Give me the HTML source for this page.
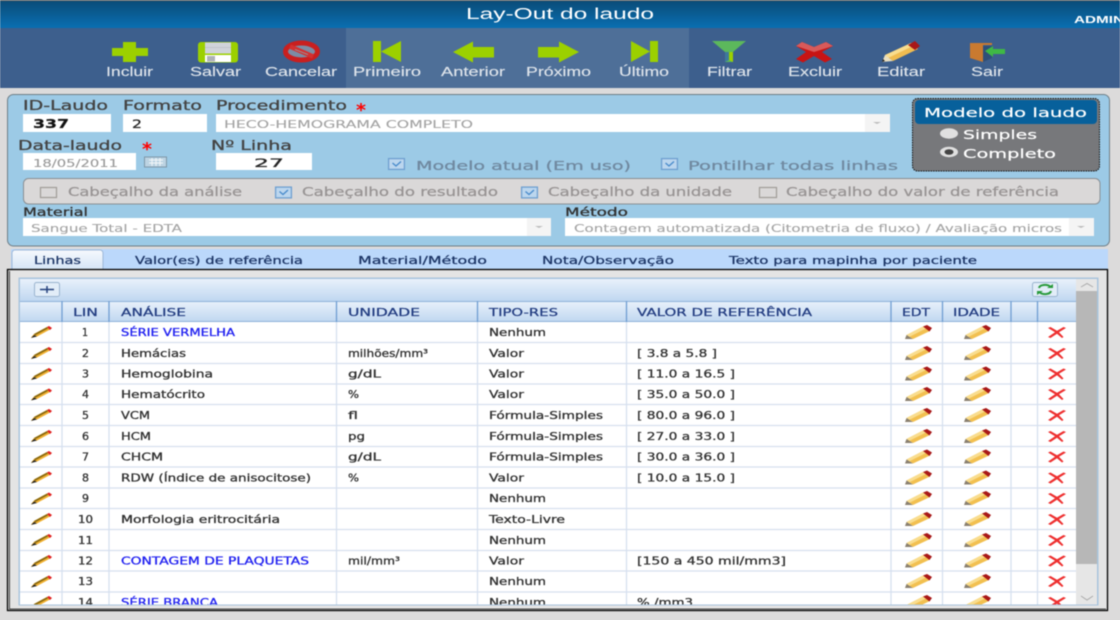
<!DOCTYPE html>
<html lang="pt"><head><meta charset="utf-8"><title>Lay-Out do laudo</title>
<style>
html,body{margin:0;padding:0;background:#dcdbdb;overflow:hidden}
svg{display:block;filter:blur(.4px)}
text{font-family:"DejaVu Sans","Liberation Sans",sans-serif;font-size:10.5px;fill:#333;stroke:#333;stroke-width:.3}
.tb{font-family:"Liberation Sans",sans-serif;font-size:13px;fill:#dde3ea;stroke:#dde3ea;stroke-width:.15}
.l{font-size:13px;fill:#444;stroke:#444;stroke-width:.3}
.d{font-size:12px;fill:#7089a0;stroke:#7089a0;stroke-width:.25}
.c{font-size:12px;fill:#989494;stroke:#989494;stroke-width:.25}
.v{font-size:11px;fill:#a4a4a4;stroke:#a4a4a4;stroke-width:.12}
.tab{font-size:11px;fill:#1c3566;stroke:#1c3566;stroke-width:.25}
.h{font-size:11px;fill:#223c80;stroke:#223c80;stroke-width:.25}
.b{fill:#2020f0;stroke:#2020f0}
.w{fill:#fff;font-size:12.5px;stroke:#fff;stroke-width:.2}
.n{stroke:none}
</style></head><body>
<svg xmlns="http://www.w3.org/2000/svg" width="1120" height="620" viewBox="0 0 1120 620">
<defs>
<linearGradient id="hd" x1="0" y1="0" x2="0" y2="1"><stop offset="0" stop-color="#0a4c78"/><stop offset="1" stop-color="#0a6fb2"/></linearGradient>
<linearGradient id="gh" x1="0" y1="0" x2="0" y2="1"><stop offset="0" stop-color="#e8f1fb"/><stop offset="1" stop-color="#c0d7f0"/></linearGradient>
<linearGradient id="tabg" x1="0" y1="0" x2="0" y2="1"><stop offset="0" stop-color="#f6f9fd"/><stop offset="1" stop-color="#d4e4f6"/></linearGradient>
<clipPath id="gc"><rect x="19" y="278" width="1079" height="327"/></clipPath>
<symbol id="pS" viewBox="0 0 21 12" overflow="visible">
<path d="M0 11.500 3 8 16 1 19 3.500 6 10.500Z" fill="#f0b030"/><path d="M3 8 16 1 17 2.500 4 9.500Z" fill="#8a6a10"/><path d="M16 1 18 0 21 2 19 4Z" fill="#e02020"/><path d="M0 12 3 9 6 10.500Z" fill="#222"/>
</symbol>
<symbol id="pL" viewBox="0 0 27 14" overflow="visible">
<path d="M1.500 10 18 1.500 25 6 8 14Z" fill="#f2c050"/><path d="M1.500 10 18 1.500 21 3.500 4 12Z" fill="#f9dd8e"/><path d="M18 1.500 22 0 27 3 24.500 6.500Z" fill="#a81818"/><path d="M0 14 1.500 10 8 14Z" fill="#8a8070"/>
</symbol>
<symbol id="x" viewBox="0 0 18 11" overflow="visible">
<path d="M0 1 2.500 0 9 3.800 15.500 0 18 1 11 5.300 15.500 10 14 11 9 6.800 2.500 11 0 10 7 5.300Z" fill="#ee3030"/>
</symbol>
<symbol id="cbk" viewBox="0 0 17 12" overflow="visible">
<rect x=".6" y=".6" width="15.8" height="10.8" fill="#bcd6ee" stroke="#6fa0d0" stroke-width="1.3"/><path d="M4.500 5 8 8 13 3.500" fill="none" stroke="#4a8ccc" stroke-width="1.400"/>
</symbol>
</defs>

<rect width="1120" height="620" fill="#dcdbdb"/>
<rect width="1120" height="1.5" fill="#666"/>
<rect y="1" width="1120" height="27" fill="url(#hd)"/>
<rect y="28" width="1120" height="60" fill="#3d5f8d"/>
<rect x="346" y="28" width="343" height="60" fill="#4e6f98"/>
<text class="n" x="466" y="19" textLength="188" lengthAdjust="spacingAndGlyphs" style="font-family:'Liberation Sans',sans-serif;font-size:15.5px;fill:#fff">Lay-Out do laudo</text>
<text class="n" x="1074" y="23" textLength="50" lengthAdjust="spacingAndGlyphs" style="font-family:'Liberation Sans',sans-serif;font-size:10.5px;font-weight:bold;fill:#fff">ADMIN</text>

<!-- toolbar icons -->
<path d="M123 42H136V48H148V56H136V62H123V56H112V48H123Z" fill="#9cd000"/>
<rect x="198" y="42" width="40" height="20.500" rx="3" fill="#9cd000"/><rect x="205" y="42.500" width="26" height="11" fill="#d0d4da"/><rect x="205" y="47" width="26" height="1" fill="#c0c4ca"/><rect x="205" y="55" width="26" height="7" fill="#fff"/><rect x="207" y="56" width="8" height="5.500" fill="#aeb2b8"/>
<ellipse cx="301.500" cy="51.500" rx="16" ry="8.500" fill="#7c8ca4" stroke="#c91f1f" stroke-width="5"/><path d="M290 46.500 313 56.500" stroke="#d43030" stroke-width="4.500"/><path d="M295 49.500 308 54.500" stroke="#9a8a90" stroke-width="1.200"/>
<path d="M373 41H381V62H373ZM381 51.500 401 41V62Z" fill="#9cd000"/>
<path d="M453 52 473 41.500V47H494V57.500H473V62.500Z" fill="#9cd000"/>
<path d="M579 52 559 41.500V47H538V57.500H559V62.500Z" fill="#9cd000"/>
<path d="M658 41H650V62H658ZM650 51.500 631 41V62Z" fill="#9cd000"/>
<path d="M712 41H746L733 52V62H725V52Z" fill="#5cb85c"/><path d="M729 52H733V62L729 60Z" fill="#9cd000"/><path d="M725 52H729V60L725 62Z" fill="#3e7a9a"/>
<path d="M802 42 814 47 826 42 833 46 822 52 832 59 825 62.500 814 56 803 62.500 796 59 806 52 796 46Z" fill="#c81414"/><path d="M802 42 814 47 826 42 833 46 814 52 796 46Z" fill="#d85a5a"/>
<path d="M885 55 911 43 918 49 893 61Z" fill="#f0bc50"/><path d="M885 55 911 43 914 45.500 888 58Z" fill="#f9dd8e"/><path d="M908 45 915 41 920 46 915 50Z" fill="#a81818"/><path d="M882 62 885 55 893 61Z" fill="#eadfc0"/><path d="M882 62 883 59 885 61Z" fill="#222"/>
<path d="M970 43H992V45H983V62L970 58Z" fill="#c97a30"/><path d="M983 46H992V58L983 62Z" fill="#2f4f78"/><path d="M985 51 993 46V49H1005V54H993V57Z" fill="#3fb845"/>

<text class="tb" x="106" y="76" textLength="47" lengthAdjust="spacingAndGlyphs">Incluir</text>
<text class="tb" x="190" y="76" textLength="51" lengthAdjust="spacingAndGlyphs">Salvar</text>
<text class="tb" x="265" y="76" textLength="72" lengthAdjust="spacingAndGlyphs">Cancelar</text>
<text class="tb" x="353" y="76" textLength="68" lengthAdjust="spacingAndGlyphs">Primeiro</text>
<text class="tb" x="441" y="76" textLength="64" lengthAdjust="spacingAndGlyphs">Anterior</text>
<text class="tb" x="526" y="76" textLength="65" lengthAdjust="spacingAndGlyphs">Próximo</text>
<text class="tb" x="619" y="76" textLength="50" lengthAdjust="spacingAndGlyphs">Último</text>
<text class="tb" x="707" y="76" textLength="45" lengthAdjust="spacingAndGlyphs">Filtrar</text>
<text class="tb" x="788" y="76" textLength="54" lengthAdjust="spacingAndGlyphs">Excluir</text>
<text class="tb" x="877" y="76" textLength="48" lengthAdjust="spacingAndGlyphs">Editar</text>
<text class="tb" x="971" y="76" textLength="32" lengthAdjust="spacingAndGlyphs">Sair</text>

<!-- form panel -->
<rect x="7.500" y="94.500" width="1102" height="151.500" rx="6" fill="#9ccae6" stroke="#6f7f88"/>
<text class="l" x="23" y="110" textLength="85" lengthAdjust="spacingAndGlyphs">ID-Laudo</text>
<text class="l" x="123" y="110" textLength="79" lengthAdjust="spacingAndGlyphs">Formato</text>
<text class="l" x="216" y="110" textLength="131" lengthAdjust="spacingAndGlyphs">Procedimento</text>
<text class="n" x="356" y="116" textLength="10" lengthAdjust="spacingAndGlyphs" style="fill:#f00;font-weight:bold;font-size:18px">*</text>
<rect x="23" y="114" width="88" height="18" fill="#fff"/><rect x="123" y="114" width="84" height="18" fill="#fff"/><rect x="216" y="114" width="674" height="18" fill="#fff"/><rect x="865" y="114" width="25" height="18" fill="#f4f4f4"/><path d="M873 122H881L877 124Z" fill="#bbb"/>
<text x="33" y="128" textLength="36" lengthAdjust="spacingAndGlyphs" style="font-weight:bold;font-size:12px;fill:#111">337</text>
<text x="132" y="128" textLength="10" lengthAdjust="spacingAndGlyphs" style="font-size:11.5px;fill:#222">2</text>
<text class="v" x="224" y="128" textLength="249" lengthAdjust="spacingAndGlyphs">HECO-HEMOGRAMA COMPLETO</text>

<text class="l" x="18" y="150" textLength="104" lengthAdjust="spacingAndGlyphs">Data-laudo</text>
<text class="n" x="142" y="155" textLength="10" lengthAdjust="spacingAndGlyphs" style="fill:#f00;font-weight:bold;font-size:18px">*</text>
<text class="l" x="211" y="150" textLength="81" lengthAdjust="spacingAndGlyphs">Nº Linha</text>
<rect x="23" y="153" width="113" height="17" fill="#fff"/><rect x="216" y="153" width="96" height="17" fill="#fff"/>
<text class="v" x="33" y="167" textLength="85" lengthAdjust="spacingAndGlyphs" style="fill:#999;stroke:#999">18/05/2011</text>
<text x="254" y="167" textLength="30" lengthAdjust="spacingAndGlyphs" style="font-size:11.500px;fill:#222">27</text>
<rect x="144.500" y="157" width="22" height="10" fill="#bcd3e2" stroke="#7d97a8"/><path d="M149 160H163M149 163H163M152 158V166M156 158V166M160 158V166" stroke="#f2f6f9" stroke-width="1"/>
<use href="#cbk" x="388" y="158" width="17" height="12"/>
<text class="d" x="416" y="170" textLength="215" lengthAdjust="spacingAndGlyphs">Modelo atual (Em uso)</text>
<use href="#cbk" x="661" y="158" width="17" height="12"/>
<text class="d" x="688" y="170" textLength="210" lengthAdjust="spacingAndGlyphs">Pontilhar todas linhas</text>

<!-- modelo box -->
<rect x="912.500" y="98.500" width="187" height="72.500" rx="5" fill="#77787b" stroke="#111" stroke-dasharray="1.500 1"/>
<path d="M915 104a4 4 0 0 1 4-4H1093a4 4 0 0 1 4 4V120a4 4 0 0 1-4 4H919a4 4 0 0 1-4-4Z" fill="#07609b"/>
<text class="w" x="924" y="117" textLength="163" lengthAdjust="spacingAndGlyphs">Modelo do laudo</text>
<ellipse cx="949" cy="133.500" rx="9" ry="5.200" fill="#e0e0e0"/>
<text class="w" x="963" y="139" textLength="74" lengthAdjust="spacingAndGlyphs">Simples</text>
<ellipse cx="949" cy="152" rx="9" ry="5.200" fill="#e0e0e0"/><ellipse cx="949" cy="152" rx="4.500" ry="2.800" fill="#444"/>
<text class="w" x="963" y="158" textLength="93" lengthAdjust="spacingAndGlyphs">Completo</text>

<!-- cabecalho -->
<rect x="23.500" y="178.500" width="1076.500" height="25.500" rx="5" fill="#dad8d8" stroke="#8a8f94"/>
<rect x="40.500" y="187.500" width="16" height="10" fill="none" stroke="#a09c98" stroke-width="1.200"/>
<text class="c" x="68" y="196" textLength="174" lengthAdjust="spacingAndGlyphs">Cabeçalho da análise</text>
<use href="#cbk" x="275" y="186.500" width="17" height="12"/>
<text class="c" x="302" y="196" textLength="196" lengthAdjust="spacingAndGlyphs">Cabeçalho do resultado</text>
<use href="#cbk" x="521" y="186.500" width="17" height="12"/>
<text class="c" x="548" y="196" textLength="184" lengthAdjust="spacingAndGlyphs">Cabeçalho da unidade</text>
<rect x="759.500" y="187.500" width="17" height="10" fill="none" stroke="#a09c98" stroke-width="1.200"/>
<text class="c" x="786" y="196" textLength="273" lengthAdjust="spacingAndGlyphs">Cabeçalho do valor de referência</text>

<text x="23" y="216" textLength="65" lengthAdjust="spacingAndGlyphs" style="font-size:11.500px">Material</text>
<text x="565" y="216" textLength="63" lengthAdjust="spacingAndGlyphs" style="font-size:11.500px">Método</text>
<rect x="23" y="218" width="528" height="18" fill="#fff"/><rect x="527" y="218" width="24" height="18" fill="#f4f4f4"/><path d="M535 226H543L539 228Z" fill="#bbb"/>
<rect x="565" y="218" width="529" height="18" fill="#fff"/><rect x="1069" y="218" width="25" height="18" fill="#f4f4f4"/><path d="M1077 226H1085L1081 228Z" fill="#bbb"/>
<text class="v" x="31" y="232" textLength="151" lengthAdjust="spacingAndGlyphs">Sangue Total - EDTA</text>
<text class="v" x="574" y="232" textLength="488" lengthAdjust="spacingAndGlyphs">Contagem automatizada (Citometria de fluxo) / Avaliação micros</text>

<!-- tabs -->
<rect x="11" y="249" width="1097" height="20" fill="#bbd8fb"/>
<path d="M12 270V253a3 3 0 0 1 3-3H100a3 3 0 0 1 3 3V270Z" fill="url(#tabg)" stroke="#9db8d8"/>
<text class="tab" x="34" y="264" textLength="47" lengthAdjust="spacingAndGlyphs">Linhas</text>
<text class="tab" x="135" y="264" textLength="168" lengthAdjust="spacingAndGlyphs">Valor(es) de referência</text>
<text class="tab" x="358" y="264" textLength="129" lengthAdjust="spacingAndGlyphs">Material/Método</text>
<text class="tab" x="542" y="264" textLength="132" lengthAdjust="spacingAndGlyphs">Nota/Observação</text>
<text class="tab" x="729" y="264" textLength="248" lengthAdjust="spacingAndGlyphs">Texto para mapinha por paciente</text>

<!-- content frame -->
<rect x="7.500" y="269.500" width="1100" height="341" fill="#e4e4e4" stroke="#000" stroke-width="1.300"/>
<path d="M9.500 271V609H1106" fill="none" stroke="#444"/>
<rect x="19" y="278" width="1079" height="327" fill="#fff" stroke="#a9c4dd"/>
<rect x="20" y="279" width="1056" height="22" fill="url(#gh)"/>
<rect x="34.500" y="282.500" width="25" height="14" rx="2" fill="#e2edf8" stroke="#9ab4cf"/>
<path d="M40 289.500H54M47 286V293" stroke="#23407c" stroke-width="1.500"/>
<rect x="1032.500" y="282.500" width="25" height="14" rx="2" fill="#e2edf8" stroke="#9ab4cf"/>
<path d="M1039 288A6 3.500 0 0 1 1050 286.500M1051 291A6 3.500 0 0 1 1040 292.500" fill="none" stroke="#2a9a3c" stroke-width="2"/><path d="M1047 288H1053V284ZM1043 291H1037V295Z" fill="#2a9a3c"/>

<!-- scrollbar -->
<rect x="1076" y="279" width="21.500" height="325.500" fill="#e6e6e6"/>
<rect x="1076" y="291" width="21.500" height="273" fill="#b7b7b7"/>
<path d="M1081 287 1087 283.500 1093 287" fill="none" stroke="#aaa"/>
<path d="M1081 596 1087 600 1093 596" fill="none" stroke="#aaa"/>

<!-- grid -->
<g clip-path="url(#gc)">
<rect x="20" y="301" width="1056" height="21" fill="url(#gh)"/>
<path d="M20 301.500H1076M20 321.500H1076" stroke="#8fb3da"/>
<path d="M20 342.500H1076M20 363.500H1076M20 384H1076M20 404.500H1076M20 425.500H1076M20 446.500H1076M20 467H1076M20 488H1076M20 508.500H1076M20 529.500H1076M20 550.500H1076M20 571H1076M20 592H1076" stroke="#d6e0ef" stroke-width="1.300"/>
<path d="M62 322V605M109 322V605M336.500 322V605M477.500 322V605M626.500 322V605M891 322V605M942.500 322V605M1011 322V605M1037.500 322V605" stroke="#d6e0ef" stroke-width="1.300"/>
<path d="M62 301V322M109 301V322M336.500 301V322M477.500 301V322M626.500 301V322M891 301V322M942.500 301V322M1011 301V322M1037.500 301V322" stroke="#6f9dd2" stroke-width="1.300"/>

<text class="h" x="73" y="316" textLength="25" lengthAdjust="spacingAndGlyphs">LIN</text>
<text class="h" x="121" y="316" textLength="65" lengthAdjust="spacingAndGlyphs">ANÁLISE</text>
<text class="h" x="348" y="316" textLength="72" lengthAdjust="spacingAndGlyphs">UNIDADE</text>
<text class="h" x="489" y="316" textLength="69" lengthAdjust="spacingAndGlyphs">TIPO-RES</text>
<text class="h" x="637" y="316" textLength="175" lengthAdjust="spacingAndGlyphs">VALOR DE REFERÊNCIA</text>
<text class="h" x="902" y="316" textLength="28" lengthAdjust="spacingAndGlyphs">EDT</text>
<text class="h" x="953" y="316" textLength="47" lengthAdjust="spacingAndGlyphs">IDADE</text>

<!-- row 1 -->
<use href="#pS" x="31" y="326" width="21" height="12"/><use href="#pL" x="905" y="325" width="27" height="14"/><use href="#pL" x="964" y="325" width="27" height="14"/><use href="#x" x="1048" y="327" width="18" height="11"/>
<text x="82" y="336" textLength="6" lengthAdjust="spacingAndGlyphs">1</text><text class="b" x="121" y="336" textLength="114" lengthAdjust="spacingAndGlyphs">SÉRIE VERMELHA</text><text x="489" y="336" textLength="57" lengthAdjust="spacingAndGlyphs">Nenhum</text>
<!-- row 2 -->
<use href="#pS" x="31" y="347" width="21" height="12"/><use href="#pL" x="905" y="346" width="27" height="14"/><use href="#pL" x="964" y="346" width="27" height="14"/><use href="#x" x="1048" y="348" width="18" height="11"/>
<text x="82" y="357" textLength="7" lengthAdjust="spacingAndGlyphs">2</text><text x="121" y="357" textLength="65" lengthAdjust="spacingAndGlyphs">Hemácias</text><text x="348" y="357" textLength="80" lengthAdjust="spacingAndGlyphs">milhões/mm³</text><text x="489" y="357" textLength="35" lengthAdjust="spacingAndGlyphs">Valor</text><text x="637" y="357" textLength="80" lengthAdjust="spacingAndGlyphs">[ 3.8 a 5.8 ]</text>
<!-- row 3 -->
<use href="#pS" x="31" y="368" width="21" height="12"/><use href="#pL" x="905" y="366.500" width="27" height="14"/><use href="#pL" x="964" y="366.500" width="27" height="14"/><use href="#x" x="1048" y="368.500" width="18" height="11"/>
<text x="82" y="377.500" textLength="7" lengthAdjust="spacingAndGlyphs">3</text><text x="121" y="377.500" textLength="92" lengthAdjust="spacingAndGlyphs">Hemoglobina</text><text x="348" y="377.500" textLength="33" lengthAdjust="spacingAndGlyphs">g/dL</text><text x="489" y="377.500" textLength="35" lengthAdjust="spacingAndGlyphs">Valor</text><text x="637" y="377.500" textLength="98" lengthAdjust="spacingAndGlyphs">[ 11.0 a 16.5 ]</text>
<!-- row 4 -->
<use href="#pS" x="31" y="388.500" width="21" height="12"/><use href="#pL" x="905" y="387" width="27" height="14"/><use href="#pL" x="964" y="387" width="27" height="14"/><use href="#x" x="1048" y="389" width="18" height="11"/>
<text x="82" y="398" textLength="7" lengthAdjust="spacingAndGlyphs">4</text><text x="121" y="398" textLength="84" lengthAdjust="spacingAndGlyphs">Hematócrito</text><text x="348" y="398" textLength="11" lengthAdjust="spacingAndGlyphs">%</text><text x="489" y="398" textLength="35" lengthAdjust="spacingAndGlyphs">Valor</text><text x="637" y="398" textLength="98" lengthAdjust="spacingAndGlyphs">[ 35.0 a 50.0 ]</text>
<!-- row 5 -->
<use href="#pS" x="31" y="409" width="21" height="12"/><use href="#pL" x="905" y="408" width="27" height="14"/><use href="#pL" x="964" y="408" width="27" height="14"/><use href="#x" x="1048" y="410" width="18" height="11"/>
<text x="82" y="419" textLength="7" lengthAdjust="spacingAndGlyphs">5</text><text x="121" y="419" textLength="29" lengthAdjust="spacingAndGlyphs">VCM</text><text x="348" y="419" textLength="10" lengthAdjust="spacingAndGlyphs">fl</text><text x="489" y="419" textLength="114" lengthAdjust="spacingAndGlyphs">Fórmula-Simples</text><text x="637" y="419" textLength="98" lengthAdjust="spacingAndGlyphs">[ 80.0 a 96.0 ]</text>
<!-- row 6 -->
<use href="#pS" x="31" y="430" width="21" height="12"/><use href="#pL" x="905" y="429" width="27" height="14"/><use href="#pL" x="964" y="429" width="27" height="14"/><use href="#x" x="1048" y="431" width="18" height="11"/>
<text x="82" y="440" textLength="7" lengthAdjust="spacingAndGlyphs">6</text><text x="121" y="440" textLength="30" lengthAdjust="spacingAndGlyphs">HCM</text><text x="348" y="440" textLength="17" lengthAdjust="spacingAndGlyphs">pg</text><text x="489" y="440" textLength="114" lengthAdjust="spacingAndGlyphs">Fórmula-Simples</text><text x="637" y="440" textLength="98" lengthAdjust="spacingAndGlyphs">[ 27.0 a 33.0 ]</text>
<!-- row 7 -->
<use href="#pS" x="31" y="451" width="21" height="12"/><use href="#pL" x="905" y="449.500" width="27" height="14"/><use href="#pL" x="964" y="449.500" width="27" height="14"/><use href="#x" x="1048" y="451.500" width="18" height="11"/>
<text x="82" y="460.500" textLength="7" lengthAdjust="spacingAndGlyphs">7</text><text x="121" y="460.500" textLength="42" lengthAdjust="spacingAndGlyphs">CHCM</text><text x="348" y="460.500" textLength="33" lengthAdjust="spacingAndGlyphs">g/dL</text><text x="489" y="460.500" textLength="114" lengthAdjust="spacingAndGlyphs">Fórmula-Simples</text><text x="637" y="460.500" textLength="98" lengthAdjust="spacingAndGlyphs">[ 30.0 a 36.0 ]</text>
<!-- row 8 -->
<use href="#pS" x="31" y="471.500" width="21" height="12"/><use href="#pL" x="905" y="470.500" width="27" height="14"/><use href="#pL" x="964" y="470.500" width="27" height="14"/><use href="#x" x="1048" y="472.500" width="18" height="11"/>
<text x="82" y="481.500" textLength="7" lengthAdjust="spacingAndGlyphs">8</text><text x="121" y="481.500" textLength="190" lengthAdjust="spacingAndGlyphs">RDW (Índice de anisocitose)</text><text x="348" y="481.500" textLength="11" lengthAdjust="spacingAndGlyphs">%</text><text x="489" y="481.500" textLength="35" lengthAdjust="spacingAndGlyphs">Valor</text><text x="637" y="481.500" textLength="98" lengthAdjust="spacingAndGlyphs">[ 10.0 a 15.0 ]</text>
<!-- row 9 -->
<use href="#pS" x="31" y="492.500" width="21" height="12"/><use href="#pL" x="905" y="491" width="27" height="14"/><use href="#pL" x="964" y="491" width="27" height="14"/><use href="#x" x="1048" y="493" width="18" height="11"/>
<text x="82" y="502" textLength="7" lengthAdjust="spacingAndGlyphs">9</text><text x="489" y="502" textLength="57" lengthAdjust="spacingAndGlyphs">Nenhum</text>
<!-- row 10 -->
<use href="#pS" x="31" y="513" width="21" height="12"/><use href="#pL" x="905" y="512" width="27" height="14"/><use href="#pL" x="964" y="512" width="27" height="14"/><use href="#x" x="1048" y="514" width="18" height="11"/>
<text x="78" y="523" textLength="15" lengthAdjust="spacingAndGlyphs">10</text><text x="121" y="523" textLength="159" lengthAdjust="spacingAndGlyphs">Morfologia eritrocitária</text><text x="489" y="523" textLength="76" lengthAdjust="spacingAndGlyphs">Texto-Livre</text>
<!-- row 11 -->
<use href="#pS" x="31" y="534" width="21" height="12"/><use href="#pL" x="905" y="533" width="27" height="14"/><use href="#pL" x="964" y="533" width="27" height="14"/><use href="#x" x="1048" y="535" width="18" height="11"/>
<text x="78" y="544" textLength="15" lengthAdjust="spacingAndGlyphs">11</text><text x="489" y="544" textLength="57" lengthAdjust="spacingAndGlyphs">Nenhum</text>
<!-- row 12 -->
<use href="#pS" x="31" y="555" width="21" height="12"/><use href="#pL" x="905" y="553.500" width="27" height="14"/><use href="#pL" x="964" y="553.500" width="27" height="14"/><use href="#x" x="1048" y="555.500" width="18" height="11"/>
<text x="78" y="564.500" textLength="15" lengthAdjust="spacingAndGlyphs">12</text><text class="b" x="121" y="564.500" textLength="188" lengthAdjust="spacingAndGlyphs">CONTAGEM DE PLAQUETAS</text><text x="348" y="564.500" textLength="52" lengthAdjust="spacingAndGlyphs">mil/mm³</text><text x="489" y="564.500" textLength="35" lengthAdjust="spacingAndGlyphs">Valor</text><text x="637" y="564.500" textLength="149" lengthAdjust="spacingAndGlyphs">[150 a 450 mil/mm3]</text>
<!-- row 13 -->
<use href="#pS" x="31" y="575.500" width="21" height="12"/><use href="#pL" x="905" y="574" width="27" height="14"/><use href="#pL" x="964" y="574" width="27" height="14"/><use href="#x" x="1048" y="576" width="18" height="11"/>
<text x="78" y="585" textLength="15" lengthAdjust="spacingAndGlyphs">13</text><text x="489" y="585" textLength="57" lengthAdjust="spacingAndGlyphs">Nenhum</text>
<!-- row 14 -->
<use href="#pS" x="31" y="596" width="21" height="12"/><use href="#pL" x="905" y="595" width="27" height="14"/><use href="#pL" x="964" y="595" width="27" height="14"/><use href="#x" x="1048" y="597" width="18" height="11"/>
<text x="78" y="606" textLength="15" lengthAdjust="spacingAndGlyphs">14</text><text class="b" x="121" y="606" textLength="97" lengthAdjust="spacingAndGlyphs">SÉRIE BRANCA</text><text x="489" y="606" textLength="57" lengthAdjust="spacingAndGlyphs">Nenhum</text><text x="637" y="606" textLength="56" lengthAdjust="spacingAndGlyphs">% /mm3</text>
</g>
<rect x="19.500" y="278.500" width="1078" height="326.500" fill="none" stroke="#a9c4dd"/>
</svg>
</body></html>
